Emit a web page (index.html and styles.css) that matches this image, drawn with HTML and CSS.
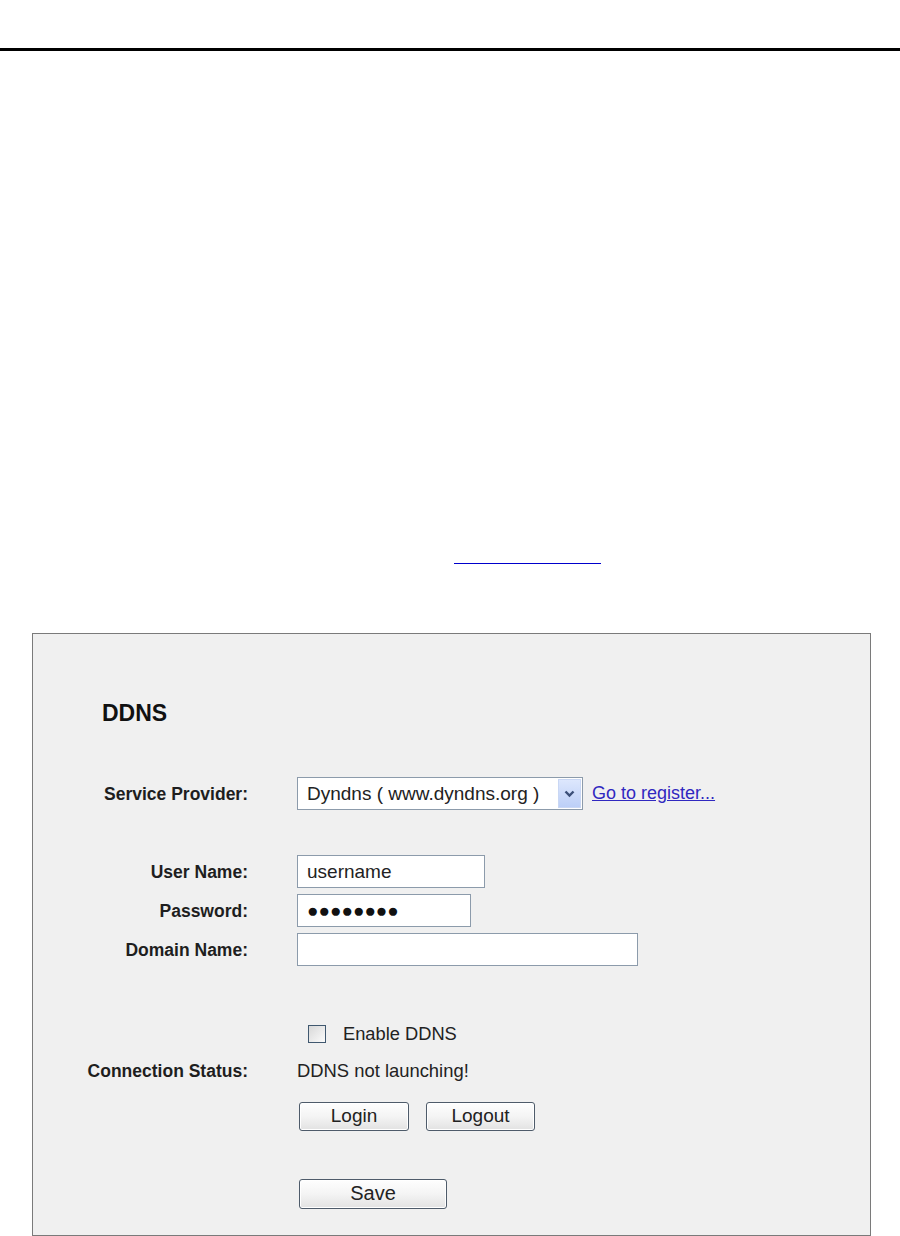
FILE: index.html
```html
<!DOCTYPE html>
<html lang="en">
<head>
    <meta charset="UTF-8">
    <meta name="viewport" content="width=device-width, initial-scale=1.0">
    <title>DDNS</title>
    <link rel="stylesheet" href="styles.css">
</head>
<body>
    <div class="page-top"></div>

    <a class="ref-link" href="#"></a>

    <div class="panel">
        <h2 class="panel-title">DDNS</h2>

        <div class="row row-provider">
            <label class="label">Service Provider:</label>
            <div class="field">
                <div class="select">
                    <span class="select-text">Dyndns ( www.dyndns.org )</span>
                    <span class="select-arrow">
                        <svg width="11" height="8" viewBox="0 0 11 8"><path d="M1.5 1.5 L5.5 5.5 L9.5 1.5" fill="none" stroke="#3b4f78" stroke-width="2.4"/></svg>
                    </span>
                </div>
                <a class="register" href="#">Go to register...</a>
            </div>
        </div>

        <div class="row row-user">
            <label class="label">User Name:</label>
            <div class="field"><input class="text-input user" type="text" value="username"></div>
        </div>

        <div class="row row-tight">
            <label class="label">Password:</label>
            <div class="field"><input class="text-input pass" type="text" value="●●●●●●●●"></div>
        </div>

        <div class="row row-tight">
            <label class="label">Domain Name:</label>
            <div class="field"><input class="text-input domain" type="text" value=""></div>
        </div>

        <div class="row row-enable">
            <span></span>
            <div class="field">
                <input class="check" type="checkbox" id="enable">
                <label class="check-text" for="enable">Enable DDNS</label>
            </div>
        </div>

        <div class="row row-status">
            <label class="label">Connection Status:</label>
            <div class="field"><span class="status">DDNS not launching!</span></div>
        </div>

        <div class="row row-buttons">
            <span></span>
            <div class="field">
                <button class="btn btn-login">Login</button>
                <button class="btn btn-logout">Logout</button>
            </div>
        </div>

        <div class="row row-save">
            <span></span>
            <div class="field"><button class="btn btn-save">Save</button></div>
        </div>
    </div>
</body>
</html>
```

FILE: styles.css
```css
body {
    margin: 0;
    background: #fff;
    font-family: "Liberation Sans", Arial, sans-serif;
    color: #222;
}

/* 顶部分隔线 */
.page-top {
    height: 48px;
    border-bottom: 3px solid #000;
}

.ref-link {
    display: block;
    width: 147px;
    height: 0;
    margin: 512px 0 0 454px;
    border-bottom: 1px solid #0000cc;
}

/* 设置面板 */
.panel {
    width: 837px;
    height: 506px;
    margin: 69px 0 0 32px;
    padding: 68px 0 27px;
    background: #f0f0f0;
    border: 1px solid #7a7a7a;
}

.panel-title {
    margin: 0 0 0 69px;
    font-size: 23px;
    line-height: 1;
    font-weight: bold;
    color: #111;
}

.row {
    display: grid;
    grid-template-columns: 215px auto;
    column-gap: 49px;
    align-items: center;
}

.row-provider { margin-top: 52px; }
.row-user { margin-top: 45px; }
.row-tight { margin-top: 6px; }
.row-enable { margin-top: 59px; }
.row-status { margin-top: 18px; }
.row-buttons { margin-top: 21px; }
.row-save { margin-top: 48px; }

.label {
    text-align: right;
    font-weight: bold;
    font-size: 17.5px;
    line-height: 1;
    padding-top: 2px;
    color: #1e1e1e;
}

.field {
    display: flex;
    align-items: center;
}

/* 下拉框 */
.select {
    display: flex;
    align-items: center;
    box-sizing: border-box;
    width: 286px;
    height: 33px;
    background: #fff;
    border: 1px solid #8c9bab;
}

.select-text {
    flex: 1;
    padding-left: 9px;
    font-size: 19px;
    white-space: nowrap;
}

.select-arrow {
    display: flex;
    align-items: center;
    justify-content: center;
    box-sizing: border-box;
    width: 23px;
    height: 29px;
    margin-right: 1px;
    background: linear-gradient(#dde7fd, #bccff7);
    border: 1px solid #c9d7f4;
}

.register {
    margin-left: 9px;
    font-size: 18px;
    color: #3028c0;
}

/* 输入框 */
.text-input {
    box-sizing: border-box;
    height: 33px;
    padding: 0 9px;
    font-family: inherit;
    font-size: 19px;
    color: #222;
    background: #fff;
    border: 1px solid #8c9bab;
    outline: none;
}

.user { width: 188px; }
.pass { width: 174px; color: #111; }
.domain { width: 341px; }

/* 复选框 */
.check {
    appearance: none;
    box-sizing: border-box;
    width: 18px;
    height: 18px;
    margin: 0 0 0 11px;
    border: 1px solid #40586f;
    background: linear-gradient(135deg, #d8d8d8, #fbfbfb);
}

.check-text {
    margin-left: 17px;
    font-size: 18.3px;
    line-height: 1;
}

.status {
    font-size: 18.4px;
    line-height: 1;
}

/* 按钮 */
.btn {
    box-sizing: border-box;
    height: 29px;
    padding: 0;
    font-family: inherit;
    font-size: 19px;
    color: #222;
    background: linear-gradient(#fefefe 0%, #f4f4f4 50%, #e2e2e2 100%);
    border: 1px solid #4e5b6a;
    border-radius: 3px;
    box-shadow: inset 0 0 0 1px #fff;
}

.btn-login {
    width: 110px;
    margin-left: 2px;
}

.btn-logout {
    width: 109px;
    margin-left: 17px;
}

.btn-save {
    width: 148px;
    height: 30px;
    margin-left: 2px;
    font-size: 20px;
}
```
